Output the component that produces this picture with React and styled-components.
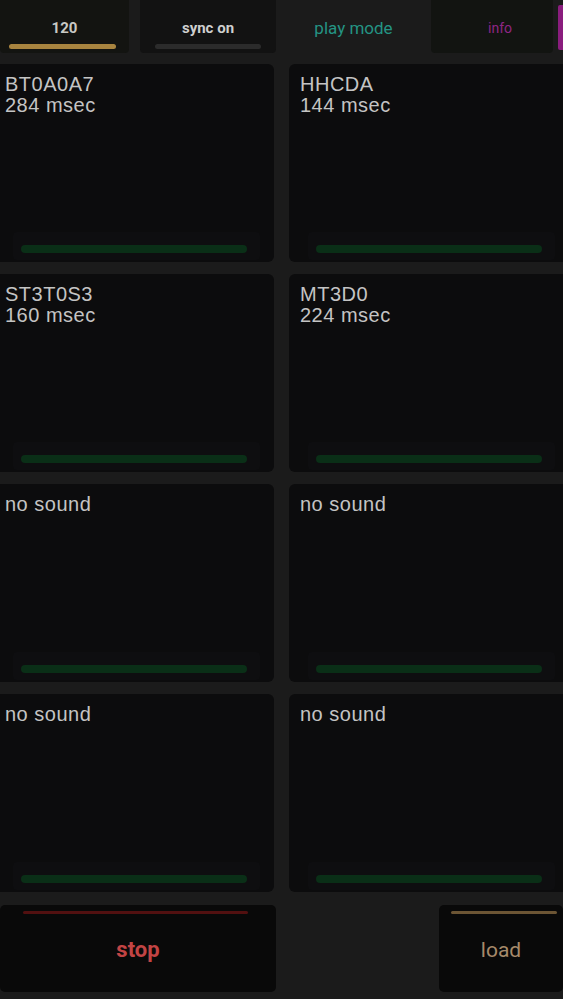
import React from 'react';
import styled, { createGlobalStyle } from 'styled-components';

const GlobalStyle = createGlobalStyle`
  html, body {
    margin: 0;
    padding: 0;
    background: #1b1b1b;
  }
  body {
    font-family: "Liberation Sans", Arial, sans-serif;
    overflow: hidden;
  }
`;

const pads = [
  { name: 'BT0A0A7', time: '284 msec' },
  { name: 'HHCDA', time: '144 msec' },
  { name: 'ST3T0S3', time: '160 msec' },
  { name: 'MT3D0', time: '224 msec' },
  { name: 'no sound' },
  { name: 'no sound' },
  { name: 'no sound' },
  { name: 'no sound' },
];

function App() {
  return (
    <Page>
      <GlobalStyle />
      <TopBar>
        <Tab $width={129} $bg="#131411">
          <TabLabel $color="#c9c9c4">120</TabLabel>
          <TabBar $color="#a8843f" $left={9} $right={13} />
        </Tab>
        <Spacer $width={11} />
        <Tab $width={136} $bg="#121212">
          <TabLabel $color="#cfcfcf">sync on</TabLabel>
          <TabBar $color="#2b2b2b" $left={15} $right={15} />
        </Tab>
        <Tab $width={155}>
          <TabLabel $color="#249484" $size={17} $weight={400}>play mode</TabLabel>
        </Tab>
        <Tab $width={122} $bg="#121411" $shift={16}>
          <TabLabel $color="#8e2684" $size={14} $weight={400}>info</TabLabel>
        </Tab>
        <Marker />
      </TopBar>

      <PadGrid>
        {pads.map((p, i) => (
          <Pad key={i}>
            <PadText>
              {p.name}
              {p.time && <br />}
              {p.time}
            </PadText>
            <Meter>
              <MeterFill />
            </Meter>
          </Pad>
        ))}
      </PadGrid>

      <BottomRow>
        <ActionButton $width={276} $line="#521010" $left={23} $right={28}>
          <ActionLabel $color="#c24444" $size={22} $weight={700}>stop</ActionLabel>
        </ActionButton>
        <ActionButton $width={124} $line="#6c5534" $left={12} $right={6}>
          <ActionLabel $color="#a68a6a">load</ActionLabel>
        </ActionButton>
      </BottomRow>
    </Page>
  );
}

const Page = styled.div`
  width: 563px;
  height: 999px;
  display: flex;
  flex-direction: column;
  background: #1b1b1b;
  overflow: hidden;
`;

const TopBar = styled.div`
  height: 53px;
  display: flex;
  align-items: stretch;
  margin-bottom: 11px;
`;

const Tab = styled.div`
  width: ${p => p.$width}px;
  flex-shrink: 0;
  background: ${p => p.$bg || 'transparent'};
  border-radius: 0 0 4px 4px;
  position: relative;
  display: flex;
  flex-direction: column;
  align-items: center;
  padding-top: 19px;
  padding-left: ${p => p.$shift || 0}px;
  box-sizing: border-box;
`;

const Spacer = styled.div`
  width: ${p => p.$width}px;
  flex-shrink: 0;
`;

const TabLabel = styled.div`
  color: ${p => p.$color};
  font-size: ${p => p.$size || 15}px;
  font-weight: ${p => p.$weight ?? 700};
  line-height: 18px;
  font-family: Roboto, "Liberation Sans", sans-serif;
`;

const TabBar = styled.div`
  position: absolute;
  left: ${p => p.$left}px;
  right: ${p => p.$right}px;
  top: 44px;
  height: 5px;
  border-radius: 3px;
  background: ${p => p.$color};
`;

const Marker = styled.div`
  width: 5px;
  margin: 5px 0 3px auto;
  background: #8a1d7e;
  border-radius: 2px 0 0 2px;
`;

const PadGrid = styled.div`
  display: grid;
  grid-template-columns: 280px 280px;
  grid-auto-rows: 198px;
  column-gap: 15px;
  row-gap: 12px;
  margin-left: -6px;
`;

const Pad = styled.div`
  background: #0c0c0d;
  border-radius: 6px;
  display: flex;
  flex-direction: column;
  justify-content: space-between;
  padding: 10px 11px 2px;
  box-sizing: border-box;
`;

const PadText = styled.div`
  color: #c4c4c4;
  font-size: 20px;
  line-height: 21px;
  letter-spacing: 0.5px;
`;

const Meter = styled.div`
  margin: 0 3px 0 8px;
  padding: 13px 13px 7px 8px;
  border-radius: 4px;
  background: #0e0e10;
`;

const MeterFill = styled.div`
  height: 8px;
  border-radius: 4px;
  background: #0a2f17;
`;

const BottomRow = styled.div`
  display: flex;
  justify-content: space-between;
  margin-top: 13px;
`;

const ActionButton = styled.div`
  width: ${p => p.$width}px;
  height: 87px;
  background: #090909;
  border-radius: 5px;
  position: relative;
  display: flex;
  align-items: center;
  justify-content: center;

  &::before {
    content: '';
    position: absolute;
    top: 6px;
    left: ${p => p.$left}px;
    right: ${p => p.$right}px;
    height: 3px;
    border-radius: 2px;
    background: ${p => p.$line};
  }
`;

const ActionLabel = styled.div`
  color: ${p => p.$color};
  font-size: ${p => p.$size || 21}px;
  font-weight: ${p => p.$weight ?? 400};
  font-family: Roboto, "Liberation Sans", sans-serif;
  margin-top: 2px;
`;

export default App;
